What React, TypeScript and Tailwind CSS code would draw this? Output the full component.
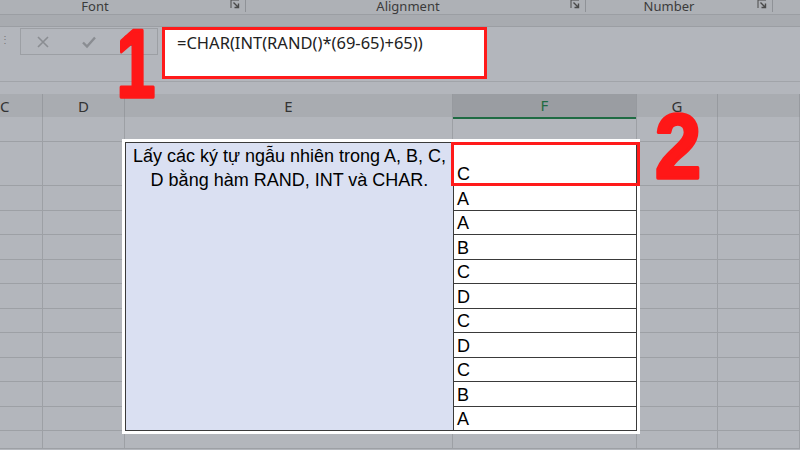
import React from 'react';

const fValues = ['A', 'A', 'B', 'C', 'D', 'C', 'D', 'C', 'B', 'A'];

// Small ribbon "dialog launcher" glyph
function Launcher() {
  return (
    <svg width="10" height="10" viewBox="0 0 10 10" className="shrink-0">
      <path d="M1 9V1h8" fill="none" stroke="#4a4a4a" strokeWidth="1" />
      <path d="M3.5 3.5l4.5 4.5M8.5 4.5v4h-4" fill="none" stroke="#4a4a4a" strokeWidth="1.4" />
    </svg>
  );
}

function RibbonGroup({ label, width, labelWidth }: { label: string; width: string; labelWidth: string }) {
  return (
    <div className={`flex items-start ${width} border-r border-[#8f9297] h-[12px]`}>
      <div className={`${labelWidth} text-center -mt-[3px]`}>{label}</div>
      <div className="flex-1" />
      <div className="mr-[5px] -mt-[1px]">
        <Launcher />
      </div>
    </div>
  );
}

function HeaderCell({ label, className = '' }: { label: string; className?: string }) {
  return (
    <div className={`flex items-center justify-center border-r border-[#979a9f] ${className}`}>{label}</div>
  );
}

// Big red annotation numbers
function Marker({ n, className, sx, size }: { n: string; className: string; sx: number; size: number }) {
  return (
    <svg className={`absolute ${className}`} width="70" height="90" viewBox="0 0 70 90">
      <text
        x={35 / sx}
        y="82"
        transform={`scale(${sx},1)`}
        textAnchor="middle"
        fontFamily="'Liberation Sans', Arial, sans-serif"
        fontWeight="700"
        fontSize={size}
        fill="#ff1717"
        stroke="#ff1717"
        strokeWidth="3.5"
        strokeLinejoin="round"
      >
        {n}
      </text>
    </svg>
  );
}

export default function App() {
  const bgCols = [1, 2, 5, 6];
  const rows = Array.from({ length: 13 }, (_, i) => i + 1);

  return (
    <div className="relative w-[800px] h-[450px] overflow-hidden bg-[#b3b6bc] font-['Noto_Sans',sans-serif] text-[#333]">
      {/* ribbon group labels (cut at top) */}
      <div className="flex h-[14px] bg-[#aeb1b6] text-[13px] leading-[18px] text-[#3b3b3b] overflow-hidden">
        <RibbonGroup label="Font" width="w-[246px]" labelWidth="w-[190px]" />
        <RibbonGroup label="Alignment" width="w-[340px]" labelWidth="w-[330px]" />
        <RibbonGroup label="Number" width="w-[187px]" labelWidth="w-[166px]" />
      </div>
      <div className="h-[13px] border-y border-[#9b9ea3] bg-[#a8abb0]" />

      {/* formula bar */}
      <div className="flex h-[55px] items-start bg-[#b3b6bc] border-b border-[#a1a4a9]">
        <div className="w-[20px] pt-[10px] text-[10px] leading-[4px] text-[#777]">⋮</div>
        <div className="mt-[1px] flex h-[27px] w-[138px] items-center border border-[#9c9fa4]">
          <svg width="14" height="14" viewBox="0 0 14 14" className="ml-[15px]">
            <path d="M2 2l10 10M12 2L2 12" stroke="#8a8d92" strokeWidth="1.6" fill="none" />
          </svg>
          <svg width="16" height="14" viewBox="0 0 16 14" className="ml-[31px]">
            <path d="M2 7.5l4 4 8-9" stroke="#8a8d92" strokeWidth="2.4" fill="none" />
          </svg>
          <span className="ml-[25px] italic text-[15px] text-[#555] font-['Liberation_Serif',serif]">fx</span>
        </div>
        <div className="ml-[4px] h-[52px] w-[325px] border-[3px] border-[#ff1a1a] bg-white pl-[12px] pt-[1px] text-[16.5px] text-[#222]">
          =CHAR(INT(RAND()*(69-65)+65))
        </div>
      </div>

      {/* gap above column headers */}
      <div className="h-[12px]" />

      {/* column headers */}
      <div className="grid h-[23px] grid-cols-[43px_82px_328px_184px_81px_1fr] bg-[#a9acb1] text-[15px] text-[#333]">
        <div className="flex items-center border-r border-[#979a9f]">C</div>
        <HeaderCell label="D" />
        <HeaderCell label="E" />
        <HeaderCell label="F" className="bg-[#9a9da2] text-[#1f6b43] border-b-2 border-b-[#1f6b43]" />
        <HeaderCell label="G" />
        <HeaderCell label="" />
      </div>

      {/* sheet grid */}
      <div className="grid grid-cols-[43px_82px_328px_184px_81px_1fr] grid-rows-[25px_44px_repeat(10,24.5px)_1fr] h-[332px] font-['Liberation_Sans',Arial,sans-serif] text-[18px] text-black">
        {rows.map((r) =>
          bgCols.map((c) => (
            <div
              key={`${r}-${c}`}
              className="border-r border-b border-[#9da0a5]"
              style={{ gridRow: r, gridColumn: c }}
            />
          ))
        )}
        {/* row 1 and last row of E, F */}
        <div className="col-start-3 row-start-1 border-r border-b border-[#9da0a5]" />
        <div className="col-start-4 row-start-1 border-r border-b border-[#9da0a5]" />
        <div className="col-start-3 row-start-13 border-r border-b border-[#9da0a5]" />
        <div className="col-start-4 row-start-13 border-r border-b border-[#9da0a5]" />

        {/* the data table */}
        <div className="col-start-3 col-span-2 row-start-2 row-span-11 flex border border-[#3a3a3a] [outline:3px_solid_white] z-10">
          <div className="w-[327px] bg-[#dae0f2] px-[1px] pt-[1px] text-center leading-[24px]">
            Lấy các ký tự ngẫu nhiên trong A, B, C, D bằng hàm RAND, INT và CHAR.
          </div>
          <div className="flex flex-1 flex-col border-l border-[#3a3a3a] bg-white">
            <div className="relative flex h-[43px] items-end border-b border-[#3a3a3a] pl-[3px] leading-[22px]">
              C
              <div className="absolute -left-[3px] -right-[4px] -top-[1px] -bottom-[1px] border-[3px] border-[#ff1a1a]" />
            </div>
            {fValues.map((v, i) => (
              <div
                key={i}
                className={`flex h-[24.5px] items-end pl-[3px] leading-[22px] ${i < fValues.length - 1 ? 'border-b border-[#3a3a3a]' : 'flex-1'}`}
              >
                {v}
              </div>
            ))}
          </div>
        </div>
      </div>

      <Marker n="1" className="left-[101px] top-[15px]" sx={0.72} size={97} />
      <Marker n="2" className="left-[643px] top-[96px]" sx={0.92} size={90} />
    </div>
  );
}
